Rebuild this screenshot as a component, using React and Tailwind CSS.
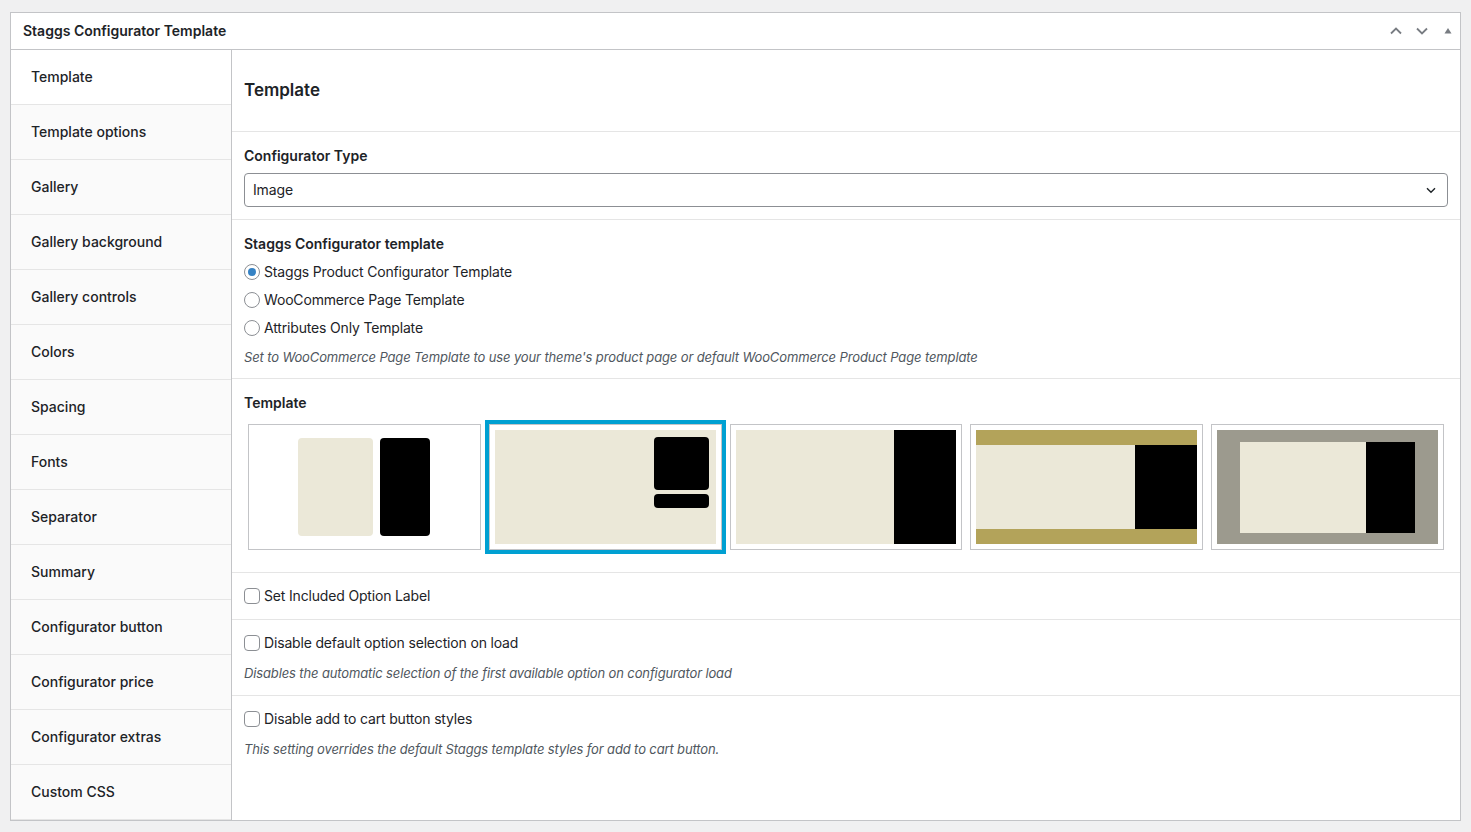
import React from 'react'

const tabs = [
  'Template',
  'Template options',
  'Gallery',
  'Gallery background',
  'Gallery controls',
  'Colors',
  'Spacing',
  'Fonts',
  'Separator',
  'Summary',
  'Configurator button',
  'Configurator price',
  'Configurator extras',
  'Custom CSS',
]

const Radio = ({ checked }) => (
  <span className='w-4 h-4 rounded-full border border-[#8c8f94] bg-white flex items-center justify-center shrink-0'>
    {checked && <span className='w-2 h-2 rounded-full bg-[#3582c4]' />}
  </span>
)

const Checkbox = () => (
  <span className='w-4 h-4 rounded-[4px] border border-[#8c8f94] bg-white shrink-0' />
)

const Thumb = ({ selected, children }) => (
  <div className={`border-4 ${selected ? 'border-[#00a0d2]' : 'border-transparent'}`}>
    <div className='border border-[#c3c4c7] bg-white p-[5px]'>
      <div className='h-[114px] relative overflow-hidden'>{children}</div>
    </div>
  </div>
)

const App = () => {
  return (
    <div className='min-h-screen bg-[#f0f0f1] pt-3 px-[10px] text-[#1d2327] text-sm' style={{ fontFamily: 'Inter, "Liberation Sans", sans-serif' }}>
      <div className='border border-[#c3c4c7] bg-white'>

        <div className='h-[37px] flex items-center justify-between border-b border-[#c3c4c7] pl-3 pr-[5px]'>
          <h2 className='font-semibold text-sm'>Staggs Configurator Template</h2>
          <div className='flex items-center gap-[12px] text-[#787c82]'>
            <svg width='14' height='14' viewBox='0 0 14 14' fill='none' stroke='currentColor' strokeWidth='1.8'><path d='M2 9.5 7 4.5 12 9.5' /></svg>
            <svg width='14' height='14' viewBox='0 0 14 14' fill='none' stroke='currentColor' strokeWidth='1.8'><path d='M2 4.5 7 9.5 12 4.5' /></svg>
            <svg width='14' height='14' viewBox='0 0 14 14' fill='currentColor'><path d='M7 4 10.5 9.5H3.5Z' /></svg>
          </div>
        </div>

        <div className='flex'>
          <ul className='w-[221px] shrink-0 bg-[#fafafa] border-r border-[#c3c4c7]'>
            {tabs.map((t, i) => (
              <li key={t} className={`h-[55px] flex items-center pl-5 font-medium border-b border-[#e5e5e5] ${i === 0 ? 'bg-white' : ''}`}>{t}</li>
            ))}
          </ul>

          <div className='flex-1 min-w-0'>
            <div className='h-[82px] flex items-center px-3 border-b border-[#e5e5e5]'>
              <h3 className='text-[17px] font-semibold'>Template</h3>
            </div>

            <div className='px-3 pt-[13px] pb-3 border-b border-[#e5e5e5]'>
              <div className='font-semibold leading-5 pt-px'>Configurator Type</div>
              <div className='mt-[7px] h-[34px] border border-[#8c8f94] rounded-[4px] flex items-center justify-between pl-2 pr-2.5 tracking-[-0.01em]'>
                <span>Image</span>
                <svg width='12' height='12' viewBox='0 0 12 12' fill='none' stroke='#1d2327' strokeWidth='1.4'><path d='M2 4.2 6 8.2 10 4.2' /></svg>
              </div>
            </div>

            <div className='px-3 pt-[14px] pb-[11px] border-b border-[#e5e5e5]'>
              <div className='font-semibold leading-5'>Staggs Configurator template</div>
              <div className='mt-1 tracking-[-0.012em]'>
                {['Staggs Product Configurator Template', 'WooCommerce Page Template', 'Attributes Only Template'].map((r, i) => (
                  <label key={r} className='h-7 flex items-center gap-1'>
                    <Radio checked={i === 0} />
                    <span>{r}</span>
                  </label>
                ))}
              </div>
              <p className='mt-[5px] text-[13px] italic text-[#50575e] leading-5 tracking-[-0.01em]'>Set to WooCommerce Page Template to use your theme's product page or default WooCommerce Product Page template</p>
            </div>

            <div className='px-3 pt-[14px] pb-[18px] border-b border-[#e5e5e5]'>
              <div className='font-semibold leading-5'>Template</div>
              <div className='mt-[7px] grid grid-cols-5'>
                <Thumb>
                  <div className='h-full flex items-center justify-center gap-[7px]'>
                    <div className='w-[75px] h-[98px] rounded-[4px] bg-[#ebe8d8]' />
                    <div className='w-[50px] h-[98px] rounded-[4px] bg-black' />
                  </div>
                </Thumb>
                <Thumb selected>
                  <div className='h-full bg-[#ebe8d8] flex justify-end pt-[7px] pr-[7px]'>
                    <div className='flex flex-col gap-[4px]'>
                      <div className='w-[55px] h-[53px] rounded-[4px] bg-black' />
                      <div className='w-[55px] h-[14px] rounded-[4px] bg-black' />
                    </div>
                  </div>
                </Thumb>
                <Thumb>
                  <div className='h-full flex'>
                    <div className='flex-1 bg-[#ebe8d8]' />
                    <div className='w-[62px] bg-black' />
                  </div>
                </Thumb>
                <Thumb>
                  <div className='h-full flex flex-col bg-[#b3a35a]'>
                    <div className='h-[15px]' />
                    <div className='flex-1 flex'>
                      <div className='flex-1 bg-[#ebe8d8]' />
                      <div className='w-[62px] bg-black' />
                    </div>
                    <div className='h-[15px]' />
                  </div>
                </Thumb>
                <Thumb>
                  <div className='h-full bg-[#9c9a8e] flex items-center justify-center'>
                    <div className='w-[175px] h-[91px] flex'>
                      <div className='flex-1 bg-[#ebe8d8]' />
                      <div className='w-[49px] bg-black' />
                    </div>
                  </div>
                </Thumb>
              </div>
            </div>

            <div className='px-3 pt-[13px] pb-[13px] border-b border-[#e5e5e5] tracking-[-0.012em]'>
              <label className='h-5 flex items-center gap-1'>
                <Checkbox />
                <span>Set Included Option Label</span>
              </label>
            </div>

            <div className='px-3 pt-[13px] pb-3 border-b border-[#e5e5e5] tracking-[-0.012em]'>
              <label className='h-5 flex items-center gap-1'>
                <Checkbox />
                <span>Disable default option selection on load</span>
              </label>
              <p className='mt-2.5 text-[13px] italic text-[#50575e] leading-5 tracking-[-0.01em]'>Disables the automatic selection of the first available option on configurator load</p>
            </div>

            <div className='px-3 pt-[13px] pb-3 tracking-[-0.012em]'>
              <label className='h-5 flex items-center gap-1'>
                <Checkbox />
                <span>Disable add to cart button styles</span>
              </label>
              <p className='mt-2.5 text-[13px] italic text-[#50575e] leading-5 tracking-[-0.01em]'>This setting overrides the default Staggs template styles for add to cart button.</p>
            </div>
          </div>
        </div>
      </div>
    </div>
  )
}

export default App
